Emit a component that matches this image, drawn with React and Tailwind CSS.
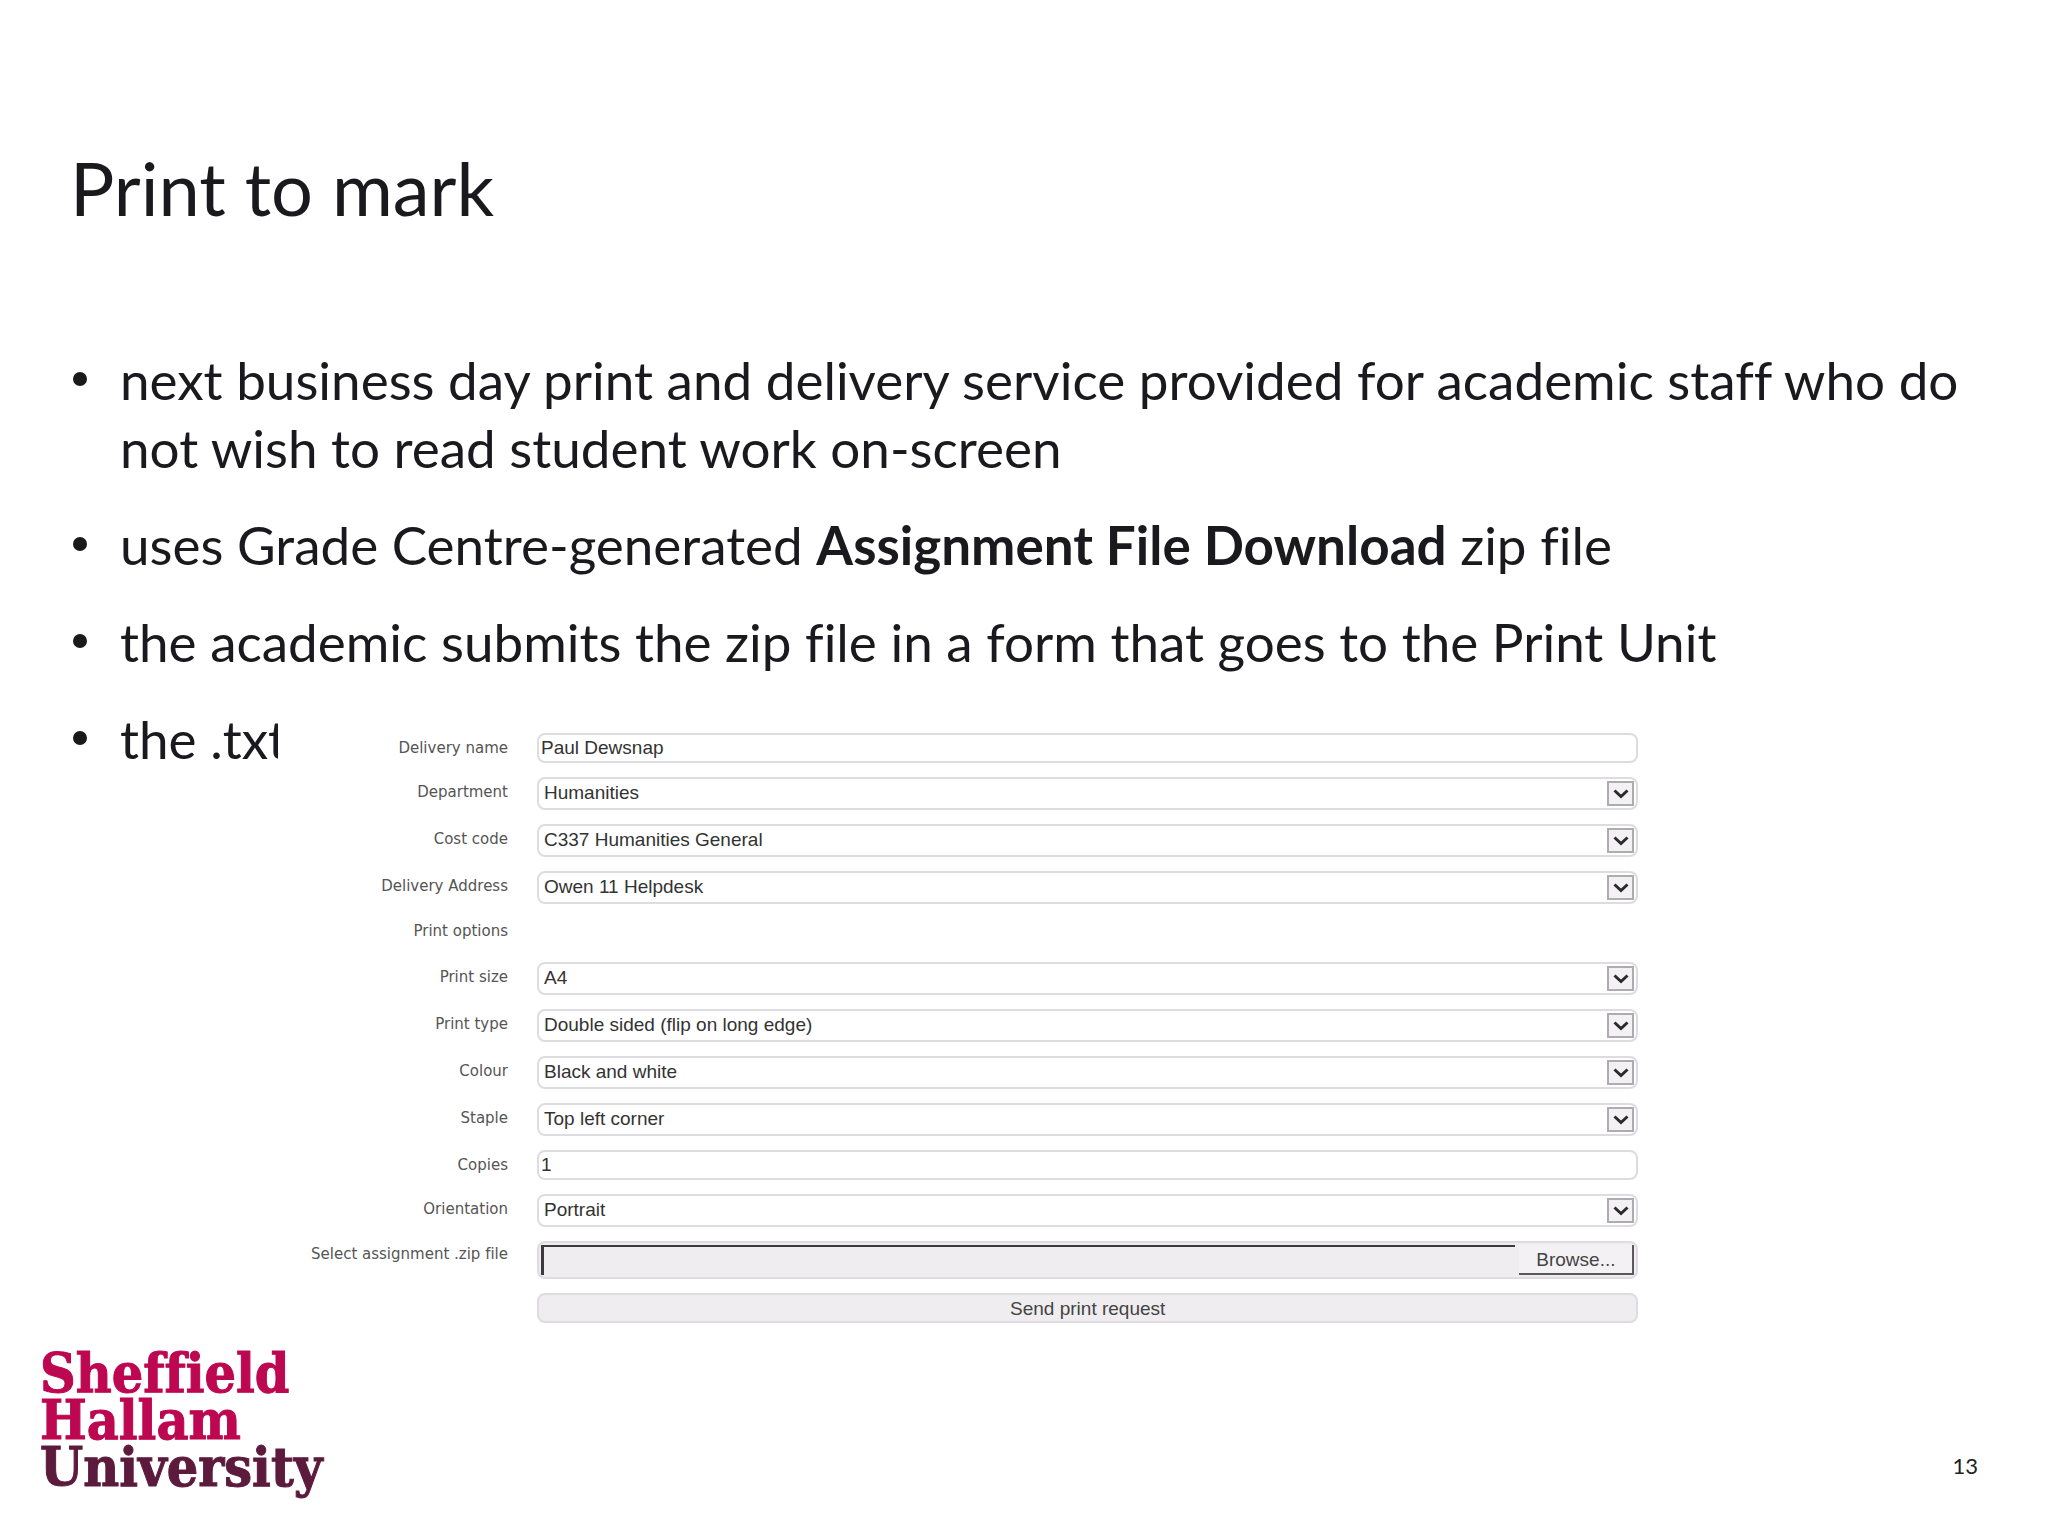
import React from "react";

const fields = [
  { id: "name", label: "Delivery name", kind: "text", value: "Paul Dewsnap" },
  { id: "department", label: "Department", kind: "select", value: "Humanities" },
  { id: "cost", label: "Cost code", kind: "select", value: "C337 Humanities General" },
  { id: "address", label: "Delivery Address", kind: "select", value: "Owen 11 Helpdesk" },
  { id: "options", label: "Print options", kind: "heading" },
  { id: "size", label: "Print size", kind: "select", value: "A4" },
  { id: "type", label: "Print type", kind: "select", value: "Double sided (flip on long edge)" },
  { id: "colour", label: "Colour", kind: "select", value: "Black and white" },
  { id: "staple", label: "Staple", kind: "select", value: "Top left corner" },
  { id: "copies", label: "Copies", kind: "text", value: "1" },
  { id: "orientation", label: "Orientation", kind: "select", value: "Portrait" },
  { id: "file", label: "Select assignment .zip file", kind: "file" },
];

const labelPadding = {
  text: "pb-0",
  heading: "pb-1",
  select: "pb-1",
  file: "pb-3",
};

function TextField({ id, value }) {
  return (
    <input
      id={id}
      type="text"
      defaultValue={value}
      className="block h-[30px] w-full rounded-lg border-2 border-[#dedce0] bg-white px-0.5 text-[19px] leading-6 text-[#333] outline-none"
    />
  );
}

function SelectField({ id, value }) {
  return (
    <div className="relative">
      <select
        id={id}
        defaultValue={value}
        className="block h-[33px] w-full appearance-none rounded-lg border-2 border-[#dedce0] bg-white px-[5px] text-[19px] text-[#333] outline-none"
      >
        <option>{value}</option>
      </select>
      <span className="pointer-events-none absolute inset-y-1 right-1 flex w-[27px] items-center justify-center border-2 border-[#aeacb0] bg-[#f3f1f4]">
        <svg viewBox="0 0 16 10" className="h-2.5 w-4" fill="none" stroke="#2c2a2d" strokeWidth="3">
          <path d="M1.500 1.500 8 7.500l6.500-6" />
        </svg>
      </span>
    </div>
  );
}

function FileField({ id }) {
  return (
    <div className="flex h-[38px] gap-1 rounded-lg border-2 border-[#dedce0] bg-[#efedf0] px-0.5 py-[2px]">
      <input
        id={id}
        type="text"
        readOnly
        className="min-w-0 flex-1 border-t-2 border-l-[3px] border-[#3c3a3e] bg-[#efedf0] px-1 text-[19px] outline-none"
      />
      <button
        type="button"
        className="w-[115px] border-r-2 border-b-2 border-[#5a585c] bg-[#f3f1f4] text-[19px] leading-none text-[#444]"
      >
        Browse...
      </button>
    </div>
  );
}

function Field({ field }) {
  if (field.kind === "heading") return <div className="h-[30px]" />;
  if (field.kind === "text") return <TextField id={field.id} value={field.value} />;
  if (field.kind === "file") return <FileField id={field.id} />;
  return <SelectField id={field.id} value={field.value} />;
}

function PrintForm() {
  return (
    <form
      onSubmit={(e) => e.preventDefault()}
      className="relative -mt-[80px] mr-[20%] ml-[278px] flex flex-col gap-3.5 bg-white pt-10 font-['Liberation_Sans',Arial,sans-serif]"
    >
      {fields.map((f) => (
        <div key={f.id} className="flex gap-[29px]">
          <div
            className={`flex w-[230px] shrink-0 items-center justify-end font-['DejaVu_Sans',Verdana,sans-serif] text-[15px] leading-5 whitespace-nowrap text-[#555] ${labelPadding[f.kind]}`}
          >
            {f.kind === "heading" ? <span>{f.label}</span> : <label htmlFor={f.id}>{f.label}</label>}
          </div>
          <div className="min-w-0 flex-1">
            <Field field={f} />
          </div>
        </div>
      ))}
      <div className="flex pl-[259px]">
        <button
          type="submit"
          className="h-[30px] flex-1 rounded-lg border-2 border-[#dedce0] bg-[#efedf0] text-[19px] leading-none text-[#444]"
        >
          Send print request
        </button>
      </div>
    </form>
  );
}

function Bullet({ children }) {
  return (
    <li className="flex">
      <span className="mt-[26px] mr-[33px] ml-[1px] size-3.5 shrink-0 rounded-full bg-[#1a1a1e]" />
      <span>{children}</span>
    </li>
  );
}

export default function App() {
  return (
    <main className="min-h-screen bg-white font-[Lato,Calibri,sans-serif] text-[#1a1a1e] [font-variant-ligatures:none]">
      <h1 className="px-[70px] pt-36 text-[74px] leading-[88px]">Print to mark</h1>
      <ul className="mt-[114px] flex flex-col gap-[29px] pr-10 pl-[72px] text-[53px] leading-[68px]">
        <Bullet>
          next business day print and delivery service provided for academic staff who do not wish to read student work
          on-screen
        </Bullet>
        <Bullet>
          uses Grade Centre-generated <b>Assignment File Download</b> zip file
        </Bullet>
        <Bullet>the academic submits the zip file in a form that goes to the Print Unit</Bullet>
        <Bullet>the .txt</Bullet>
      </ul>
      <PrintForm />
      <footer className="mt-[26px] flex items-end justify-between pr-[70px] pb-5 pl-10">
        <div
          role="img"
          aria-label="Sheffield Hallam University"
          className="font-['DejaVu_Serif_Condensed','DejaVu_Serif',serif] text-[55px] leading-[47px] font-bold text-[#bd0750] [-webkit-text-stroke:1px]"
        >
          <div>Sheffield</div>
          <div>Hallam</div>
          <div className="text-[#5c1a3c]">University</div>
        </div>
        <span className="pb-2 text-[22px] leading-8 text-[#222]">13</span>
      </footer>
    </main>
  );
}
